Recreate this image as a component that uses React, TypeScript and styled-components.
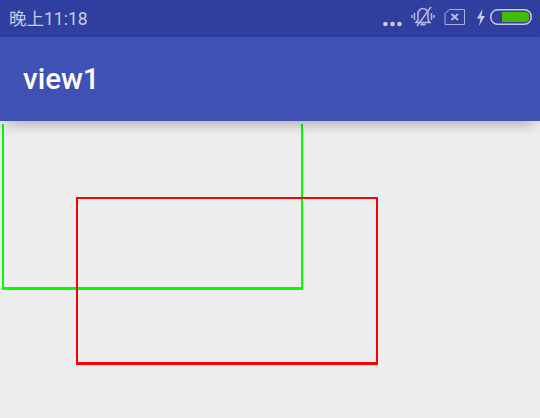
import React from 'react';
import styled, { createGlobalStyle } from 'styled-components';

const GlobalStyle = createGlobalStyle`
  html, body {
    margin: 0;
    padding: 0;
    background-color: #eeeeee;
  }
`;

const Screen = styled.div`
  width: 540px;
  height: 418px;
  display: flex;
  flex-direction: column;
  overflow: hidden;
  background-color: #eeeeee;
`;

const StatusBar = styled.div`
  height: 37px;
  box-sizing: border-box;
  flex-shrink: 0;
  display: flex;
  align-items: center;
  justify-content: space-between;
  padding: 0 8px 3px 9px;
  background-color: #303f9f;
  color: #c5cae9;
  font-family: Roboto, 'Noto Sans CJK SC', sans-serif;
  font-size: 17.500px;
`;

const StatusIcons = styled.div`
  display: flex;
  align-items: center;
`;

const AppBar = styled.div`
  height: 84px;
  flex-shrink: 0;
  display: flex;
  align-items: center;
  padding-left: 23px;
  background-color: #3f51b5;
  color: #fff;
  font-family: Roboto, sans-serif;
  font-size: 29.500px;
  font-weight: 500;
  position: relative;
  z-index: 1;
  box-shadow: 0 7px 14px -5px rgba(0, 0, 0, 0.32);
`;

const Canvas = styled.div`
  position: relative;
  flex: 1;
  margin-top: 3px;
  overflow: hidden;
`;

const Outline = styled.div<{ $color: string; $left: number; $top: number; $width: number }>`
  position: absolute;
  left: ${(p) => p.$left}px;
  top: ${(p) => p.$top}px;
  width: ${(p) => p.$width}px;
  height: 168px;
  box-sizing: border-box;
  border: 2px solid ${(p) => p.$color};
  border-bottom-width: 3px;
`;

const Dots = styled.svg`
  width: 20px;
  height: 8px;
  margin-top: 14px;
`;

const Mute = styled.svg`
  width: 24px;
  height: 22px;
  margin-left: 8px;
`;

const Sim = styled.svg`
  width: 22px;
  height: 18px;
  margin-left: 9px;
`;

const Bolt = styled.svg`
  width: 10px;
  height: 17px;
  margin-left: 10px;
`;

const Battery = styled.svg`
  width: 42px;
  height: 16px;
  margin-left: 4px;
`;

const DotsIcon = () => (
  <Dots viewBox="0 0 20 8">
    <circle cx="2.500" cy="4" r="2.300" fill="#c5cae9" />
    <circle cx="9.500" cy="4" r="2.300" fill="#c5cae9" />
    <circle cx="16.500" cy="4" r="2.300" fill="#c5cae9" />
  </Dots>
);

const MuteIcon = () => (
  <Mute viewBox="0 0 24 22" fill="none" stroke="#b4bae2">
    <path d="M7 8c0-3 2.200-5.500 5-5.500S17 5 17 8v6l2 2.500H5l2-2.500z" strokeWidth="1.500" />
    <path d="M9.500 18.500h5" strokeWidth="2" />
    <path d="M20 1 6 20" strokeWidth="1.500" />
    <path d="M3.500 7v7M1 9v3M20.500 7v7M23 9v3" strokeWidth="1.500" />
  </Mute>
);

const SimIcon = () => (
  <Sim viewBox="0 0 22 18" fill="none" stroke="#a9b0de">
    <path d="M5.500 1.500h15v15h-19.500v-11z" strokeWidth="1" />
    <path d="M7.500 6l6.500 6M14 6l-6.500 6" strokeWidth="2" stroke="#b4bae2" />
  </Sim>
);

const BoltIcon = () => (
  <Bolt viewBox="0 0 10 17">
    <path d="M6.500 0 1 9.500h3.500L3 17l6-10H5.500z" fill="#c5cae9" />
  </Bolt>
);

const BatteryIcon = () => (
  <Battery viewBox="0 0 42 16">
    <rect x="0.750" y="0.750" width="40.500" height="14.500" rx="7" fill="none" stroke="#c5cae9" strokeWidth="1.500" />
    <path d="M12 3h24a4 4 0 0 1 3 5 4 4 0 0 1-3 5H12z" fill="#44bb00" />
  </Battery>
);

export default function App() {
  return (
    <Screen>
      <GlobalStyle />
      <StatusBar>
        <span>晚上11:18</span>
        <StatusIcons>
          <DotsIcon />
          <MuteIcon />
          <SimIcon />
          <BoltIcon />
          <BatteryIcon />
        </StatusIcons>
      </StatusBar>
      <AppBar>view1</AppBar>
      <Canvas>
        <Outline $color="#00ff00" $left={2} $top={-2} $width={301} />
        <Outline $color="#ff0000" $left={76} $top={73} $width={302} />
      </Canvas>
    </Screen>
  );
}
